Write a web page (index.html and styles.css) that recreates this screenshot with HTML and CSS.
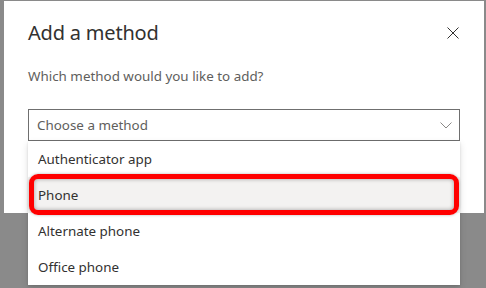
FILE: index.html
```html
<!DOCTYPE html>
<html lang="en">
<head>
<meta charset="utf-8">
<title>Add a method</title>
<link rel="stylesheet" href="styles.css">
</head>
<body>
<div class="screen">
  <div class="dialog">
    <div class="header">
      <h1 class="title">Add a method</h1>
      <button class="close" aria-label="Close">
        <svg width="12" height="12" viewBox="0 0 12 12"><path d="M0.5 0.5 L11.5 11.5 M11.5 0.5 L0.5 11.5" stroke="#323130" stroke-width="1" fill="none"/></svg>
      </button>
    </div>
    <p class="prompt">Which method would you like to add?</p>
    <div class="select">
      <span class="placeholder">Choose a method</span>
      <svg class="chevron" width="12" height="7" viewBox="0 0 12 7"><path d="M0.5 0.5 L6 6 L11.5 0.5" stroke="#8a8886" stroke-width="1" fill="none"/></svg>
    </div>
  </div>
  <ul class="menu">
    <li class="option">Authenticator app</li>
    <li class="option selected">Phone</li>
    <li class="option">Alternate phone</li>
    <li class="option">Office phone</li>
  </ul>
  <div class="highlight"></div>
</div>
</body>
</html>
```

FILE: styles.css
```css
* { box-sizing: border-box; }
html, body { margin: 0; padding: 0; }
body {
  width: 486px;
  height: 288px;
  overflow: hidden;
  background: #8a8a8a;
  font-family: "Noto Sans", "Open Sans", sans-serif;
}
.screen {
  position: relative;
  width: 486px;
  height: 288px;
  padding: 1px 0 0 4px;
}
.dialog {
  width: 480px;
  height: 212px;
  background: #ffffff;
  padding: 18px 24px 0 24px;
  display: flex;
  flex-direction: column;
}
.header {
  display: flex;
  align-items: center;
  height: 28px;
}
.title {
  flex: 1;
  margin: 0;
  font-size: 20px;
  line-height: 28px;
  font-weight: 400;
  color: #323130;
  letter-spacing: -0.2px;
}
.close {
  border: 0;
  background: none;
  padding: 0;
  margin: 0 1px 0 0;
  width: 12px;
  height: 12px;
  display: flex;
}
.prompt {
  margin: 19px 0 0 0;
  font-size: 13.4px;
  line-height: 20px;
  color: #605e5c;
}
.select {
  margin-top: 23px;
  height: 32px;
  border: 1px solid #6f6f6f;
  display: flex;
  align-items: center;
  justify-content: space-between;
  padding: 0 7px 0 8px;
}
.placeholder {
  font-size: 13.4px;
  color: #605e5c;
}
.menu {
  position: absolute;
  left: 28px;
  top: 141px;
  width: 432px;
  margin: 0;
  padding: 0;
  list-style: none;
  background: #ffffff;
  box-shadow: 0 3px 7px rgba(0,0,0,0.13), 0 1px 2px rgba(0,0,0,0.11);
}
.option {
  height: 36px;
  display: flex;
  align-items: center;
  padding-left: 10px;
  font-size: 13.4px;
  color: #323130;
}
.option.selected {
  background: #f3f2f1;
}
.highlight {
  position: absolute;
  left: 29px;
  top: 174px;
  width: 430px;
  height: 41px;
  border: 5px solid #ff0000;
  border-radius: 9px;
  box-shadow: inset 0 0 4px rgba(0,0,0,0.35), 0 0 3px rgba(0,0,0,0.3);
}
```
